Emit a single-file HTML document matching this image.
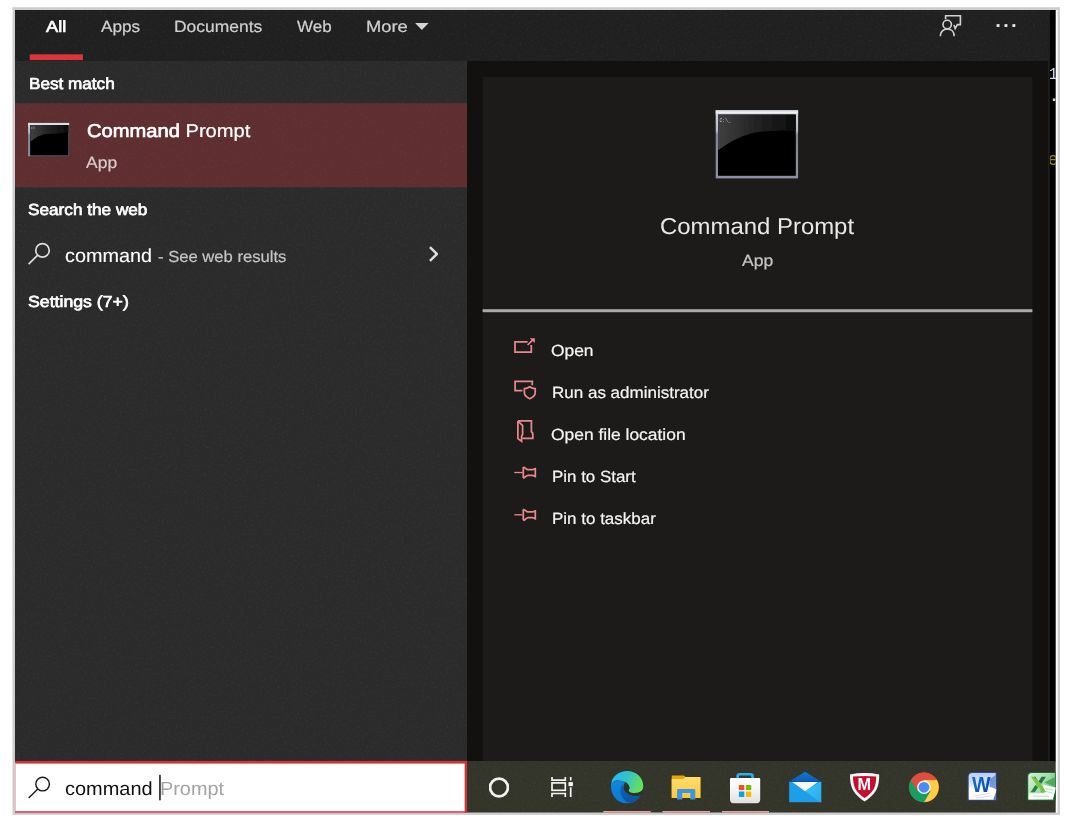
<!DOCTYPE html>
<html lang="en">
<head>
<meta charset="utf-8">
<title>Windows Search - Command Prompt</title>
<style>
html,body{margin:0;padding:0;background:#fff;}
body{width:1067px;height:819px;overflow:hidden;position:relative;font-family:"Liberation Sans",sans-serif;}
#bg{position:absolute;left:0;top:0;width:1067px;height:819px;}
.t{position:absolute;white-space:pre;transform-origin:0 0;text-rendering:geometricPrecision;filter:blur(0.45px);-webkit-text-stroke:0.22px currentColor;}
.t b,.sb{font-weight:400;-webkit-text-stroke:0.66px currentColor;}
.ic{position:absolute;overflow:visible;}
</style>
</head>
<body>
<svg id="bg" width="1067" height="819" viewBox="0 0 1067 819">
  <defs>
    <filter id="grain" x="0" y="0" width="100%" height="100%" color-interpolation-filters="sRGB">
      <feTurbulence type="fractalNoise" baseFrequency="0.45" numOctaves="2" seed="7" result="n"/>
      <feColorMatrix in="n" type="matrix" values="0 0 0 0 1  0 0 0 0 1  0 0 0 0 1  0.4 0 0 0 -0.19"/>
      <feGaussianBlur stdDeviation="0.7"/>
    </filter>
  </defs>
  <!-- outer frame -->
  <rect x="12.5" y="7.2" width="1047.4" height="807.7" fill="#cdcdcd"/>
  <rect x="15" y="10" width="1042.6" height="802.7" fill="#ffffff"/>
  <!-- background window strip -->
  <rect x="15" y="10" width="1040.7" height="751.5" fill="#000000"/>
  <!-- right dark panel -->
  <rect x="467" y="10" width="582.2" height="751.5" fill="#121110"/>
  <rect x="1048.2" y="10" width="1.5" height="751" fill="#222222"/>
  <!-- tab bar -->
  <rect x="15" y="10" width="1034.6" height="51" fill="#202020"/>
  <!-- left panel -->
  <rect x="15" y="61" width="452" height="700.5" fill="#2b2b2b"/>
  <!-- selected row -->
  <rect x="15" y="103.2" width="452" height="84.2" fill="#5e2e31"/>
  <!-- card -->
  <rect x="482.6" y="76.8" width="549.8" height="684.7" fill="#1c1b19"/>
  <!-- divider -->
  <rect x="482.6" y="309.2" width="549.8" height="3" fill="#a9a9a9"/>
  <!-- active tab underline -->
  <rect x="29.7" y="54.3" width="53.2" height="5.8" fill="#d9353b"/>
  <!-- taskbar -->
  <rect x="15" y="761" width="1040.7" height="51.6" fill="#33352a"/>
  <!-- search box -->
  <rect x="15" y="760.9" width="452" height="52" fill="#d0333a"/>
  <rect x="15" y="810.9" width="449.6" height="2" fill="#da686e"/>
  <rect x="15" y="763.6" width="449.6" height="47.4" fill="#ffffff"/>
  <rect x="15" y="763.6" width="1" height="47.4" fill="#f0bfc3"/>
  <!-- acrylic grain -->
  <g opacity="0.26">
  <rect x="15" y="10" width="1034.6" height="51" fill="#ffffff" filter="url(#grain)"/>
  <rect x="15" y="61" width="452" height="700" fill="#ffffff" filter="url(#grain)"/>
  <rect x="467" y="761" width="588.7" height="51.6" fill="#ffffff" filter="url(#grain)"/>
  </g>
  <!-- running indicators -->
  <rect x="603.2" y="811" width="47.5" height="1.6" fill="#e8a0a4"/>
  <rect x="662.5" y="811" width="47.6" height="1.6" fill="#e8a0a4"/>
  <rect x="721.9" y="811" width="47.1" height="1.6" fill="#e8a0a4"/>
  <!-- text caret -->
  <rect x="159.2" y="774.8" width="1.5" height="25.5" fill="#111111"/>
</svg>
<div id="bgwin" style="position:absolute;left:1049.7px;top:10px;width:6.1px;height:751px;overflow:hidden;font-family:'Liberation Mono',monospace;filter:blur(0.4px)">
<span style="position:absolute;left:-1.6px;top:55.8px;font-size:17px;line-height:17px;color:#c9d3e4">1</span>
<span style="position:absolute;left:-0.6px;top:78.2px;font-size:17px;line-height:17px;color:#d8dccf;font-weight:700">.</span>
<span style="position:absolute;left:-1.9px;top:140.6px;font-size:18px;line-height:18px;color:#948c00">e</span>
</div>
<svg id="icons" class="ic" width="1067" height="819" viewBox="0 0 1067 819" style="left:0;top:0">
<defs>
<filter id="soft" x="-5%" y="-5%" width="110%" height="110%"><feGaussianBlur stdDeviation="0.45"/></filter>
<filter id="soft2" x="-5%" y="-5%" width="110%" height="110%"><feGaussianBlur stdDeviation="0.6"/></filter>
<linearGradient id="gGloss" x1="0" y1="0" x2="1" y2="0"><stop offset="0" stop-color="#404040"/><stop offset="0.5" stop-color="#222222"/><stop offset="1" stop-color="#0c0c0c"/></linearGradient>
<linearGradient id="gFrame" x1="0" y1="0" x2="0" y2="1"><stop offset="0" stop-color="#d6d9e2"/><stop offset="0.3" stop-color="#b4b9c6"/><stop offset="0.36" stop-color="#7d8494"/><stop offset="1" stop-color="#8a91a2"/></linearGradient>
<linearGradient id="gTitle" x1="0" y1="0" x2="0" y2="1"><stop offset="0" stop-color="#bfc4d0"/><stop offset="0.5" stop-color="#f2f3f7"/><stop offset="1" stop-color="#c9cdd8"/></linearGradient>
<linearGradient id="gEdgeTop" x1="0" y1="0" x2="1" y2="0.35"><stop offset="0" stop-color="#2db4f2"/><stop offset="0.5" stop-color="#30c2d0"/><stop offset="1" stop-color="#62e060"/></linearGradient>
<linearGradient id="gEdgeMid" x1="0" y1="0" x2="0.4" y2="1"><stop offset="0" stop-color="#1488d8"/><stop offset="1" stop-color="#0a7ad8"/></linearGradient>
<linearGradient id="gEdgeDark" x1="0" y1="0" x2="1" y2="1"><stop offset="0" stop-color="#0e62b4"/><stop offset="1" stop-color="#10509c"/></linearGradient>
<linearGradient id="gFolder" x1="0" y1="0" x2="0" y2="1"><stop offset="0" stop-color="#ffdd70"/><stop offset="1" stop-color="#fcc83a"/></linearGradient>
<linearGradient id="gBag" x1="0" y1="0" x2="0" y2="1"><stop offset="0" stop-color="#ffffff"/><stop offset="0.5" stop-color="#f4f4f4"/><stop offset="1" stop-color="#e0e0e0"/></linearGradient>
<linearGradient id="gMailR" x1="0" y1="0" x2="1" y2="1"><stop offset="0" stop-color="#3cc8f6"/><stop offset="1" stop-color="#2aa8ec"/></linearGradient>
<linearGradient id="gMailTop" x1="0" y1="0" x2="0" y2="1"><stop offset="0" stop-color="#0c78d4"/><stop offset="1" stop-color="#0a5cb4"/></linearGradient>
<linearGradient id="gWord" x1="0" y1="0" x2="0" y2="1"><stop offset="0" stop-color="#b8cdf6"/><stop offset="0.45" stop-color="#dfe8fa"/><stop offset="0.6" stop-color="#ffffff"/><stop offset="1" stop-color="#ffffff"/></linearGradient>
<linearGradient id="gW" x1="0" y1="0" x2="1" y2="1"><stop offset="0" stop-color="#1a7ad8"/><stop offset="1" stop-color="#0a38a0"/></linearGradient>
<linearGradient id="gExcel" x1="0" y1="0" x2="1" y2="0.6"><stop offset="0" stop-color="#d8f0d8"/><stop offset="0.6" stop-color="#a8dcac"/><stop offset="1" stop-color="#58b060"/></linearGradient>
<linearGradient id="gX" gradientUnits="userSpaceOnUse" x1="1045.7" y1="776.8" x2="1031" y2="792.2"><stop offset="0" stop-color="#1e7848"/><stop offset="0.36" stop-color="#1e7848"/><stop offset="0.4" stop-color="#7cc444"/><stop offset="0.6" stop-color="#7cc444"/><stop offset="0.64" stop-color="#1e7848"/><stop offset="1" stop-color="#2a8a4a"/></linearGradient>
<clipPath id="clipR"><rect x="0" y="0" width="1055.8" height="819"/></clipPath>
</defs>
<g filter="url(#soft)">
<rect x="715.70" y="110.00" width="82.40" height="68.40" fill="url(#gFrame)"/>
<rect x="715.70" y="110.00" width="82.40" height="4.60" fill="url(#gTitle)"/>
<rect x="718.00" y="114.60" width="77.80" height="61.20" fill="#000"/>
<path d="M718.00 114.60 H795.80 V130.60 C784.88 130.78 776.69 131.20 768.50 131.20 C745.77 131.50 730.62 141.65 718.00 150.20 Z" fill="url(#gGloss)"/>
<text x="719.4" y="121.6" font-family="Liberation Mono, monospace" font-size="5.2" fill="#c8c8c8" textLength="11.5" lengthAdjust="spacingAndGlyphs">C:\_</text>
</g>
<g filter="url(#soft)">
<rect x="28.10" y="122.90" width="41.10" height="33.30" fill="#4b5262"/>
<rect x="28.10" y="122.90" width="2.10" height="33.30" fill="url(#gFrame)"/>
<rect x="28.10" y="122.90" width="41.10" height="2.10" fill="url(#gTitle)"/>
<rect x="30.20" y="125.00" width="38.00" height="30.20" fill="#000"/>
<path d="M30.20 125.00 H68.20 V132.20 C60.72 132.68 55.11 133.80 49.50 133.80 C40.81 134.10 35.03 138.20 30.20 141.80 Z" fill="url(#gGloss)"/>
<text x="31.2" y="128.8" font-family="Liberation Mono, monospace" font-size="3" fill="#e8e8e8" textLength="3.6" lengthAdjust="spacingAndGlyphs">C:\</text>
</g>
<g filter="url(#soft)" fill="none" stroke="#dcdcdc" stroke-width="1.70"><circle cx="42.50" cy="250.40" r="6.75"/><path d="M37.71 255.16 L28.60 264.20"/></g>
<g filter="url(#soft)" fill="none" stroke="#1e1e1e" stroke-width="1.45"><circle cx="42.60" cy="784.10" r="6.80"/><path d="M37.77 788.89 L28.70 797.90"/></g>
<path filter="url(#soft)" d="M429.9 247.2 L437 254 L429.9 260.8" fill="none" stroke="#dedede" stroke-width="2.5"/>
<path filter="url(#soft)" d="M415.1 23.0 H428.6 L421.85 29.9 Z" fill="#d4d4d4"/>
<g filter="url(#soft)" fill="none" stroke="#d2d2d2" stroke-width="1.6">
<path d="M945.6 19.2 V15.7 H960.4 V24.6 H957.4 L955.2 28.6 L954 24.9"/>
<circle cx="947.2" cy="24.5" r="4.2"/>
<path d="M940.4 36.2 C940.4 31.6 943.4 29 947.3 29 C951.2 29 954.2 31.6 954.2 36.2"/>
</g>
<g filter="url(#soft)" fill="#e6e6e6"><rect x="996.6" y="24.1" width="2.9" height="2.9"/><rect x="1004.5" y="24.1" width="2.9" height="2.9"/><rect x="1012.4" y="24.1" width="2.9" height="2.9"/></g>
<g filter="url(#soft)" fill="none" stroke="#e8888e" stroke-width="1.75">
<path d="M527.6 341.8 H515 V352.1 H531.3 V345"/>
<path d="M527.6 345 L533.4 339.3"/>
<path d="M529.8 338.2 H534.8 V343 Z" fill="#e8888e" stroke="none"/>
<path d="M522.4 390.6 H515.1 V381.4 H532.3 V385.2"/>
<path d="M529.8 386.8 C528.2 388 526.4 388.5 524.4 388.6 V392.6 C524.4 395.4 526.6 397.4 529.8 398.8 C533 397.4 535.2 395.4 535.2 392.6 V388.6 C533.2 388.5 531.4 388 529.8 386.8 Z"/>
<path d="M517.9 420.9 H531.4 V431.6 L532.8 433.4 V438.4 H522.3"/>
<path d="M517.9 420.9 V438.6 L521.6 441.2 V436.4 L522.6 434.2 V425.6 L518.4 421.4"/>
<path d="M514.3 472.50 H522.6" stroke-width="1.3"/>
<path d="M523.3 467.00 V478.00 M523.3 467.00 C525.2 467.00 526 469.60 528 469.60 H532.4 C534 469.60 534.4 468.50 535.3 468.50 V476.50 C534.4 476.50 534 475.40 532.4 475.40 H528 C526 475.40 525.2 478.00 523.3 478.00"/>
<path d="M514.3 514.80 H522.6" stroke-width="1.3"/>
<path d="M523.3 509.30 V520.30 M523.3 509.30 C525.2 509.30 526 511.90 528 511.90 H532.4 C534 511.90 534.4 510.80 535.3 510.80 V518.80 C534.4 518.80 534 517.70 532.4 517.70 H528 C526 517.70 525.2 520.30 523.3 520.30"/>
</g>
<circle filter="url(#soft)" cx="499" cy="787.5" r="8.95" fill="none" stroke="#f2f2f2" stroke-width="2.8"/>
<g filter="url(#soft)" fill="none" stroke="#f4f4f4" stroke-width="1.7">
<path d="M552 776.9 V780.2 H565.3 V776.9"/>
<rect x="552" y="782.9" width="13.3" height="7.4"/>
<path d="M552 797 V793.5 H565.3 V797"/>
<path d="M570.7 776.9 V780.4 M570.7 787.2 V797"/>
<rect x="568.5" y="782.1" width="4.4" height="4" fill="#f8f8f8" stroke="none"/>
</g>
<g filter="url(#soft2)" transform="translate(611,771)">
<path d="M0.2 12 C-0.8 19 1.5 27 9 30.8 C14 33.2 21 32.8 25.5 29.2 C27.4 27.6 28.8 26 29.5 24.2 L16 22 L12.6 15 L14 11 L8.4 8.6 Z" fill="url(#gEdgeMid)"/>
<path d="M12.6 13.2 C10.4 14.4 9.4 16.6 9.4 19.2 C9.4 23.2 11.4 27.8 14.8 30.5 C17 31.8 19 32.1 20.9 31.9 C23.5 31.3 26 29.3 27.6 27.3 C28.5 26.1 29.2 25.1 29.5 24.2 C26.5 25.7 21.5 25.7 17.8 23.7 C14.6 21.9 12.6 19 12.4 16.2 Z" fill="url(#gEdgeDark)"/>
<path d="M0.2 12.2 C1.5 5 8 0 16.2 0 C25 0 32.2 6.5 32.3 15 C32.3 17 31.7 18.6 30.6 19.8 C28.8 21.6 26.2 22 23.8 22 C21.4 22 19.2 21.4 18 20.4 C17.2 19.7 17.3 19.2 17.8 18.4 C18.6 17.4 18.6 15.8 17.8 14.3 C16.6 12 14.4 10.8 11.6 10 C9.6 9.4 8.4 8.8 7 9 C4.4 9.4 2 10.8 0.2 12.2 Z" fill="url(#gEdgeTop)"/>
<path d="M12.6 17.3 C12.5 15.2 13.8 14 15.4 14 C17 14 18.4 15.4 18.5 17 C18.6 18.2 17.6 18.8 17.4 19.6 C17.3 20.4 18.4 21.2 19.6 21.7 C21 22.2 22.4 22.4 24 22.4 C26.5 22.4 29 21.9 30.8 20 L31.4 21.4 C30.8 22.8 30 23.7 29.5 24.2 C26.5 25.5 21.5 25.5 17.8 23.5 C15 22 12.8 19.8 12.6 17.3 Z" fill="#2f3126"/>
</g>
<g filter="url(#soft2)">
<path d="M671.7 775.6 H684 L685.4 777 H700.4 V798 H671.7 Z" fill="#e9a800"/>
<path d="M671.7 778.9 H683.5 L685.2 777.1 H700.4 V798 H671.7 Z" fill="url(#gFolder)"/>
<path d="M677.1 799.6 V790.2 Q677.1 788.9 678.4 788.9 H694 Q695.3 788.9 695.3 790.2 V799.6 H690.3 V793 H682.2 V799.6 Z" fill="#3b97e6"/>
</g>
<g filter="url(#soft2)">
<path d="M737.7 780.8 V776 Q737.7 774.2 739.5 774.2 H750.7 Q752.5 774.2 752.5 776 V780.8" fill="none" stroke="#25b2f4" stroke-width="2.6"/>
<path d="M730 779.2 Q730 778.1 731.1 778.1 H759.1 Q760.2 778.1 760.2 779.2 V799.6 Q760.2 803.2 756.6 803.2 H733.6 Q730 803.2 730 799.6 Z" fill="url(#gBag)"/>
<rect x="738.9" y="785" width="5.4" height="5.1" fill="#f25022"/>
<rect x="745.9" y="785" width="5.3" height="5.1" fill="#7fba00"/>
<rect x="738.9" y="791.5" width="5.4" height="5.5" fill="#00a4ef"/>
<rect x="745.9" y="791.5" width="5.3" height="5.5" fill="#ffb900"/>
</g>
<g filter="url(#soft2)">
<path d="M789.2 781.6 L805.1 771.8 L821.2 781.6 Z" fill="url(#gMailTop)"/>
<rect x="789.2" y="781.4" width="32" height="20.8" fill="#1f9fe8"/>
<path d="M821.2 781.6 V802.2 H820 L805.1 791.1 Z" fill="url(#gMailR)"/>
<rect x="789.2" y="781" width="32" height="1" fill="#0850a4"/>
<path d="M792.3 781.9 H817.9 L805.1 791.2 Z" fill="#f6f6f6"/>
</g>
<g filter="url(#soft2)">
<path d="M850 774.4 Q864.6 771.6 879.2 774.4 C879.2 781 878.6 786 876 790.4 C873.4 794.8 869 798.6 864.6 801.4 C860.2 798.6 855.8 794.8 853.2 790.4 C850.6 786 850 781 850 774.4 Z" fill="#f4f6f8"/>
<path d="M853 776.6 Q864.6 775.6 876.2 776.6 C876.2 781.6 875.6 785.6 873.6 789.2 C871.6 792.6 868.2 795.6 864.6 798 C861 795.6 857.6 792.6 855.6 789.2 C853.6 785.6 853 781.6 853 776.6 Z" fill="#c8102e"/>
</g>
<text filter="url(#soft)" x="857.6" y="790.1" font-family="Liberation Sans, sans-serif" font-weight="700" font-size="16.6" fill="#ffffff" textLength="13.6" lengthAdjust="spacingAndGlyphs">M</text>
<g filter="url(#soft2)">
<circle cx="923.95" cy="787.30" r="14.90" fill="#de4e41"/>
<path d="M923.95 779.85 L936.85 779.85 A14.90 14.90 0 0 1 923.95 802.20 L930.40 791.02 L923.95 787.30 Z" fill="#ffcd42"/>
<path d="M930.40 791.02 L923.95 802.20 A14.90 14.90 0 0 1 911.05 779.85 L917.50 791.02 L923.95 787.30 Z" fill="#18a05e"/>
<path d="M917.50 791.02 L911.05 779.85 A14.90 14.90 0 0 1 936.85 779.85 L923.95 779.85 L923.95 787.30 Z" fill="#de4e41"/>
<circle cx="923.95" cy="787.30" r="6.8" fill="#eef2fa"/>
<circle cx="923.95" cy="787.30" r="5.4" fill="#4c8bf5"/>
</g>
<g filter="url(#soft2)">
<path d="M967.7 776.4 Q967.7 771.9 972.2 771.9 H996.7 V800.6 H967.7 Z" fill="#2a4c9c"/>
<path d="M968.7 776.6 Q968.7 772.9 972.4 772.9 H995.7 V799.6 H968.7 Z" fill="url(#gWord)"/>
<path d="M990 779 L995.7 775 V789 L989.5 786.5 Z" fill="#5a80d4" opacity="0.8"/>
<path d="M969 792 L982 786 L996.6 789.4 L993.6 799.6 H969 Z" fill="#ffffff"/>
<path d="M993.4 799.6 L995.7 792.6 V799.6 Z" fill="#4a68b8"/>
<path d="M974 796.2 L990 793.2 M976 798 L991 795.6" stroke="#c8d4ec" stroke-width="0.8" fill="none"/>
</g>
<text filter="url(#soft)" x="971.9" y="792.2" font-family="Liberation Sans, sans-serif" font-weight="700" font-size="22.4" fill="url(#gW)" textLength="18.6" lengthAdjust="spacingAndGlyphs">W</text>
<g clip-path="url(#clipR)"><g filter="url(#soft2)">
<path d="M1027.2 776.4 Q1027.2 771.9 1031.7 771.9 H1056.2 V800.6 H1027.2 Z" fill="#1d6b34"/>
<path d="M1028.2 776.6 Q1028.2 772.9 1031.9 772.9 H1055.2 V799.6 H1028.2 Z" fill="url(#gExcel)"/>
<path d="M1044 782.5 L1055.2 777 V786.4 Z" fill="#4aa858" opacity="0.9"/>
<path d="M1029 793.2 H1044 L1043 784.4 L1056 787.4 L1053.4 799.6 H1028.6 Z" fill="#ffffff" opacity="0.95"/>
<path d="M1053 799.6 L1055.8 789 V799.6 Z" fill="#0e5a2a"/>
<path d="M1045.5 788.5 L1053 790.2 M1046 791.5 L1052.4 793 M1033 796 L1049 796.4" stroke="#b4dcb8" stroke-width="0.9" fill="none"/>
</g>
<text filter="url(#soft)" x="1030.9" y="792.2" font-family="Liberation Sans, sans-serif" font-weight="700" font-size="22.4" fill="url(#gX)" stroke="url(#gX)" stroke-width="0.7" textLength="14.9" lengthAdjust="spacingAndGlyphs">X</text>
</g>
</svg>
<div class="t sb" id="tAll" style="left:46.37px;top:20.00px;font-size:16.0px;line-height:16.0px;color:#ffffff;transform:scaleX(1.1371)">All</div>
<div class="t" id="tApps" style="left:100.80px;top:19.00px;font-size:16.2px;line-height:16.2px;color:#cfcfcf;transform:scaleX(1.0603)">Apps</div>
<div class="t" id="tDocs" style="left:173.65px;top:19.00px;font-size:16.2px;line-height:16.2px;color:#cfcfcf;transform:scaleX(1.0775)">Documents</div>
<div class="t" id="tWeb" style="left:297.20px;top:19.00px;font-size:16.2px;line-height:16.2px;color:#cfcfcf;transform:scaleX(1.0492)">Web</div>
<div class="t" id="tMore" style="left:365.59px;top:19.00px;font-size:16.2px;line-height:16.2px;color:#cfcfcf;transform:scaleX(1.1314)">More</div>
<div class="t sb" id="tBest" style="left:28.73px;top:77.00px;font-size:16.0px;line-height:16.0px;color:#ffffff;transform:scaleX(1.0709)">Best match</div>
<div class="t" id="tRow" style="left:86.76px;top:122.00px;font-size:18.5px;line-height:18.5px;color:#ffffff;transform:scaleX(1.0883)"><b style="font-weight:400;-webkit-text-stroke:0.66px currentColor">Command</b> Prompt</div>
<div class="t" id="tRowApp" style="left:86.10px;top:155.00px;font-size:16.2px;line-height:16.2px;color:#d9caca;transform:scaleX(1.0796)">App</div>
<div class="t sb" id="tSearchWeb" style="left:28.06px;top:203.00px;font-size:16.0px;line-height:16.0px;color:#ffffff;transform:scaleX(1.0739)">Search the web</div>
<div class="t" id="tCmd" style="left:65.12px;top:247.00px;font-size:19.0px;line-height:19.0px;color:#ffffff;transform:scaleX(1.0429);-webkit-text-stroke:0.1px currentColor">command</div>
<div class="t" id="tSee" style="left:158.08px;top:250.00px;font-size:16.0px;line-height:16.0px;color:#c4c4c4;transform:scaleX(1.0379)">- See web results</div>
<div class="t sb" id="tSettings" style="left:28.05px;top:295.00px;font-size:16.0px;line-height:16.0px;color:#ffffff;transform:scaleX(1.1056)">Settings (7+)</div>
<div class="t" id="tTitle" style="left:659.86px;top:215.00px;font-size:23.0px;line-height:23.0px;color:#e8e8e8;transform:scaleX(1.0399);-webkit-text-stroke:0px currentColor">Command Prompt</div>
<div class="t" id="tTitleApp" style="left:741.60px;top:253.00px;font-size:16.2px;line-height:16.2px;color:#c4c4c4;transform:scaleX(1.0832)">App</div>
<div class="t" id="tOpen" style="left:551.09px;top:343.00px;font-size:16.2px;line-height:16.2px;color:#f4f4f4;transform:scaleX(1.0737)">Open</div>
<div class="t" id="tRun" style="left:551.59px;top:385.00px;font-size:16.2px;line-height:16.2px;color:#f4f4f4;transform:scaleX(1.0507)">Run as administrator</div>
<div class="t" id="tLoc" style="left:551.09px;top:427.00px;font-size:16.2px;line-height:16.2px;color:#f4f4f4;transform:scaleX(1.0761)">Open file location</div>
<div class="t" id="tPinS" style="left:551.59px;top:469.00px;font-size:16.2px;line-height:16.2px;color:#f4f4f4;transform:scaleX(1.0451)">Pin to Start</div>
<div class="t" id="tPinT" style="left:551.59px;top:511.00px;font-size:16.2px;line-height:16.2px;color:#f4f4f4;transform:scaleX(1.0492)">Pin to taskbar</div>
<div class="t" id="tBoxCmd" style="left:65.41px;top:780.00px;font-size:19.0px;line-height:19.0px;color:#111111;transform:scaleX(1.0503);-webkit-text-stroke:0px currentColor">command</div>
<div class="t" id="tBoxPrompt" style="left:159.73px;top:780.00px;font-size:19.0px;line-height:19.0px;color:#a4a4a4;transform:scaleX(1.0460);-webkit-text-stroke:0px currentColor">Prompt</div>
</body>
</html>
